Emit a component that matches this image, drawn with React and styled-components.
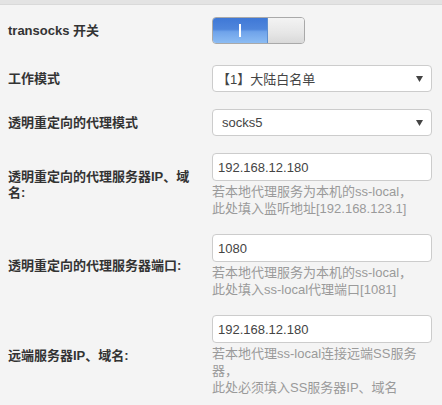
import React from "react";
import styled, { createGlobalStyle } from "styled-components";

const Global = createGlobalStyle`
  html, body { margin: 0; padding: 0; background: #f4f4f4; }
  body { font-family: "Liberation Sans", Arial, "Noto Sans CJK SC", sans-serif; font-size: 13px; color: #333; }
`;

const TopBand = styled.div`
  height: 4px;
  background: #e3e3e3;
  border-bottom: 1px solid #d9d9d9;
`;

const Form = styled.div`
  display: flex;
  flex-direction: column;
  gap: 17px;
  padding: 12px 10px 12px 8px;
`;

const Row = styled.div`
  display: flex;
  align-items: center;
  padding-bottom: ${(p) => (p.$extra ? `${p.$extra}px` : "0")};
`;

const Label = styled.div`
  flex: 0 0 192px;
  margin-right: 12px;
  font-weight: bold;
  font-size: 13px;
  line-height: 16px;
  color: #333;
`;

const Value = styled.div`
  flex: 0 0 220px;
  display: flex;
  flex-direction: column;
`;

const Toggle = styled.div`
  display: flex;
  width: 93px;
  height: 27px;
  box-sizing: border-box;
  border: 1px solid #a9a9a9;
  border-radius: 4px;
  overflow: hidden;
`;

const ToggleOn = styled.div`
  flex: 0 0 54px;
  display: flex;
  align-items: center;
  justify-content: center;
  background: linear-gradient(to bottom, #3f78d6 0%, #4f86dc 45%, #6fa3ea 55%, #8cbcf3 100%);
  border-right: 1px solid #5e8fd0;
`;

const ToggleBar = styled.span`
  width: 2px;
  height: 13px;
  background: #fff;
`;

const ToggleOff = styled.div`
  flex: 1;
  background: linear-gradient(to bottom, #f3f3f3 0%, #e6e6e6 60%, #d9d9d9 100%);
`;

const SelectBox = styled.div`
  display: flex;
  align-items: center;
  justify-content: space-between;
  height: 27px;
  box-sizing: border-box;
  padding: 0 8px 0 ${(p) => p.$pad || 9}px;
  background: #fff;
  border: 1px solid #cccccc;
  border-radius: 4px;
  font-size: 13px;
  color: #444;
`;

const Input = styled.input`
  height: 28px;
  box-sizing: border-box;
  width: 100%;
  padding: 0 5px;
  margin: 0;
  background: #fff;
  border: 1px solid #cccccc;
  border-radius: 4px;
  font-family: inherit;
  font-size: 13px;
  color: #444;
  outline: none;
`;

const Help = styled.div`
  margin-top: 2px;
  max-width: 207px;
  font-size: 13px;
  line-height: 17px;
  color: #9a9a9a;
`;

const Arrow = () => (
  <svg width="7" height="6" viewBox="0 0 7 6">
    <path d="M0 0 L7 0 L3.5 6 Z" fill="#444" />
  </svg>
);

export default function App() {
  return (
    <>
      <Global />
      <TopBand />
      <Form>
        <Row $extra={4}>
          <Label>transocks 开关</Label>
          <Value>
            <Toggle>
              <ToggleOn>
                <ToggleBar />
              </ToggleOn>
              <ToggleOff />
            </Toggle>
          </Value>
        </Row>
        <Row>
          <Label>工作模式</Label>
          <Value>
            <SelectBox $pad={4}>
              <span>【1】大陆白名单</span>
              <Arrow />
            </SelectBox>
          </Value>
        </Row>
        <Row>
          <Label>透明重定向的代理模式</Label>
          <Value>
            <SelectBox>
              <span>socks5</span>
              <Arrow />
            </SelectBox>
          </Value>
        </Row>
        <Row>
          <Label>透明重定向的代理服务器IP、域名:</Label>
          <Value>
            <Input defaultValue="192.168.12.180" />
            <Help>
              若本地代理服务为本机的ss-local，
              <br />
              此处填入监听地址[192.168.123.1]
            </Help>
          </Value>
        </Row>
        <Row>
          <Label>透明重定向的代理服务器端口:</Label>
          <Value>
            <Input defaultValue="1080" />
            <Help>
              若本地代理服务为本机的ss-local，
              <br />
              此处填入ss-local代理端口[1081]
            </Help>
          </Value>
        </Row>
        <Row>
          <Label>远端服务器IP、域名:</Label>
          <Value>
            <Input defaultValue="192.168.12.180" />
            <Help>
              若本地代理ss-local连接远端SS服务器，
              <br />
              此处必须填入SS服务器IP、域名
            </Help>
          </Value>
        </Row>
      </Form>
    </>
  );
}
